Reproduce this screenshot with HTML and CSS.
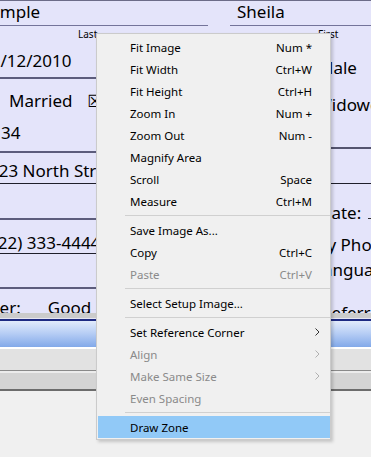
FILE: index.html
```html
<!DOCTYPE html>
<html>
<head>
<meta charset="utf-8">
<link rel="stylesheet" href="styles.css">
</head>
<body>
<div class="form">
  <div class="col left">
    <div class="row la"><span class="cut-sample">Sample</span></div>
    <div class="row llab"><span class="lab-last">Last</span></div>
    <div class="row lb"><span class="cut-date">01/12/2010</span></div>
    <div class="row lc"><span class="married">Married</span><span class="chk">☒</span><span>Single</span></div>
    <div class="row ld"><span class="num">34</span></div>
    <div class="row le"><span class="cut-street">123 North Street</span></div>
    <div class="row lf"></div>
    <div class="row lg"><span class="cut-phone">(222) 333-4444</span></div>
    <div class="row lh"></div>
    <div class="row li"><span class="cut-smoker">Smoker:</span><span class="good">Good</span></div>
  </div>
  <div class="col right">
    <div class="row ra"><span class="first-name">Sheila</span></div>
    <div class="row rlab"><span class="lab-first">First</span></div>
    <div class="row rb"><span class="male">Male</span></div>
    <div class="row rc"><span class="widow">Widowed</span></div>
    <div class="row rd"></div>
    <div class="row re"><span class="date-lab">Date:</span><span class="field"></span></div>
    <div class="row rf"><span class="phone-lab">Emergency Phone</span></div>
    <div class="row rg"><span class="lang-lab">Language</span></div>
    <div class="row rh"><span class="ref-lab">Referral</span></div>
  </div>
</div>
<div class="bars">
  <div class="bar-gray"></div>
  <div class="bar-navy"></div>
  <div class="bar-blue"></div>
  <div class="bar-white"></div>
  <div class="bar-light"></div>
  <div class="bar-dark1"></div>
  <div class="bar-hi"></div>
  <div class="bar-mid"></div>
  <div class="bar-dark2"></div>
</div>

<div class="menu">
  <div class="mi"><span class="lbl">Fit Image</span><span class="key">Num *</span></div>
  <div class="mi"><span class="lbl">Fit Width</span><span class="key">Ctrl+W</span></div>
  <div class="mi"><span class="lbl">Fit Height</span><span class="key">Ctrl+H</span></div>
  <div class="mi"><span class="lbl">Zoom In</span><span class="key">Num +</span></div>
  <div class="mi"><span class="lbl">Zoom Out</span><span class="key">Num -</span></div>
  <div class="mi"><span class="lbl">Magnify Area</span></div>
  <div class="mi"><span class="lbl">Scroll</span><span class="key">Space</span></div>
  <div class="mi"><span class="lbl">Measure</span><span class="key">Ctrl+M</span></div>
  <div class="sep"></div>
  <div class="mi"><span class="lbl">Save Image As...</span></div>
  <div class="mi"><span class="lbl">Copy</span><span class="key">Ctrl+C</span></div>
  <div class="mi dis"><span class="lbl">Paste</span><span class="key">Ctrl+V</span></div>
  <div class="sep"></div>
  <div class="mi"><span class="lbl">Select Setup Image...</span></div>
  <div class="sep"></div>
  <div class="mi"><span class="lbl">Set Reference Corner</span><svg class="arrow" width="5" height="8" viewBox="0 0 5 8"><path d="M0.5 0.5 L4 4 L0.5 7.5" fill="none" stroke="currentColor" stroke-width="1"/></svg></div>
  <div class="mi dis"><span class="lbl">Align</span><svg class="arrow" width="5" height="8" viewBox="0 0 5 8"><path d="M0.5 0.5 L4 4 L0.5 7.5" fill="none" stroke="currentColor" stroke-width="1"/></svg></div>
  <div class="mi dis"><span class="lbl">Make Same Size</span><svg class="arrow" width="5" height="8" viewBox="0 0 5 8"><path d="M0.5 0.5 L4 4 L0.5 7.5" fill="none" stroke="currentColor" stroke-width="1"/></svg></div>
  <div class="mi dis"><span class="lbl">Even Spacing</span></div>
  <div class="sep"></div>
  <div class="mi hot"><span class="lbl">Draw Zone</span></div>
</div>
</body>
</html>
```
FILE: styles.css
```css
* { box-sizing: border-box; margin: 0; padding: 0; }
html, body { width: 371px; height: 457px; overflow: hidden; }
body { background: #f0f0f0; position: relative; font-family: "Noto Sans", "Open Sans", sans-serif; }

.form {
  display: flex;
  height: 313px;
  background: #e4e4fa;
  border-top: 1px solid #6c6c88;
  overflow: hidden;
  font-size: 17px;
  line-height: 20px;
  color: #000;
}
.col { display: flex; flex-direction: column; overflow: hidden; white-space: nowrap; flex: none; }
.left { width: 208px; }
.right { width: 141px; margin-left: 22px; }
.row { flex: none; display: block; }
.row span { display: inline-block; }

.la, .ra { height: 25px; padding-top: 1px; border-bottom: 1px solid #74749a; }
.llab, .rlab { height: 14px; padding-top: 2px; font-size: 10px; line-height: 12px; }
.lab-last { margin-left: 78px; }
.lab-first { margin-left: 88px; }

.lb { height: 39px; padding-top: 11px; border-bottom: 2px solid #5c5c7c; }
.lc { height: 41px; padding-top: 12px; }
.ld { height: 33px; padding-top: 3px; border-bottom: 2px solid #5c5c7c; }
.le { height: 31px; padding-top: 8px; border-bottom: 1px solid #1e1e2a; }
.lf { height: 36px; border-bottom: 2px solid #5c5c7c; }
.lg { height: 34px; padding-top: 13px; border-bottom: 1px solid #1e1e2a; }
.lh { height: 35px; border-bottom: 2px solid #5c5c7c; }
.li { height: 24px; padding-top: 9px; overflow: hidden; }

.cut-sample { margin-left: -19px; }
.cut-date { margin-left: -19px; }
.married { margin-left: 9px; }
.chk { margin-left: 15px; margin-right: 4px; font-family: "DejaVu Sans", sans-serif; font-size: 17px; }
.num { margin-left: 1px; }
.cut-street { margin-left: -11px; }
.cut-phone { margin-left: -17px; }
.cut-smoker { margin-left: -45px; }
.good { margin-left: 27px; }

.rb { height: 52px; padding-top: 18px; }
.rc { height: 57px; padding-top: 3px; border-bottom: 2px solid #54546f; }
.rd { height: 35px; border-bottom: 1px solid #1e1e2a; }
.re { height: 48px; padding-top: 19px; }
.rf { height: 26px; padding-top: 3px; }
.rg { height: 30px; padding-top: 2px; }
.rh { height: 25px; padding-top: 15px; overflow: hidden; }

.first-name { margin-left: 7px; }
.male { margin-left: 88px; }
.widow { margin-left: 86px; }
.date-lab { margin-left: 89px; }
.field { width: 30px; height: 1px; border-top: 1px solid #333; margin-left: 7px; vertical-align: 0; }
.phone-lab { margin-left: 17px; }
.lang-lab { margin-left: 84px; }
.ref-lab { margin-left: 91px; }

.bars div { width: 100%; }
.bar-gray { height: 5px; background: #cbcbcb; }
.bar-navy { height: 3px; background: linear-gradient(#e6e6f2 0 1px, #1d2a82 1px); }
.bar-blue { height: 26px; background: linear-gradient(#e2ebfb, #b9cff5 45%, #82a9e9); }
.bar-white { height: 2px; background: #ffffff; }
.bar-light { height: 21px; background: #e2e2e2; }
.bar-dark1 { height: 1px; background: #8a8a8a; }
.bar-hi { height: 2px; background: #ececec; }
.bar-mid { height: 16px; background: #d4d4d4; }
.bar-dark2 { height: 2px; background: #6c6c6c; }

.menu {
  position: absolute;
  left: 96px;
  top: 33px;
  width: 235px;
  height: 407px;
  background: #f0f0f0;
  border: 1px solid #cbcbcb;
  padding: 2px 0 1px 0;
  box-shadow: 2px 2px 3px rgba(0, 0, 0, 0.18);
  font-size: 11.5px;
  color: #000;
}
.mi {
  height: 22px;
  margin-left: 1px;
  display: flex;
  align-items: center;
  padding-left: 32px;
  padding-right: 10px;
  white-space: nowrap;
}
.mi .lbl { flex: 1; }
.mi .key { margin-right: 8px; }
.mi .arrow { margin-right: 0; color: #333; }
.mi.dis { color: #8a8a8a; }
.mi.dis .arrow { color: #b0b0b0; }
.mi.hot { background: #91c9f7; }
.sep { height: 7px; padding-top: 3px; margin-left: 28px; }
.sep::before { content: ""; display: block; height: 1px; background: #d0d0d0; }
```
